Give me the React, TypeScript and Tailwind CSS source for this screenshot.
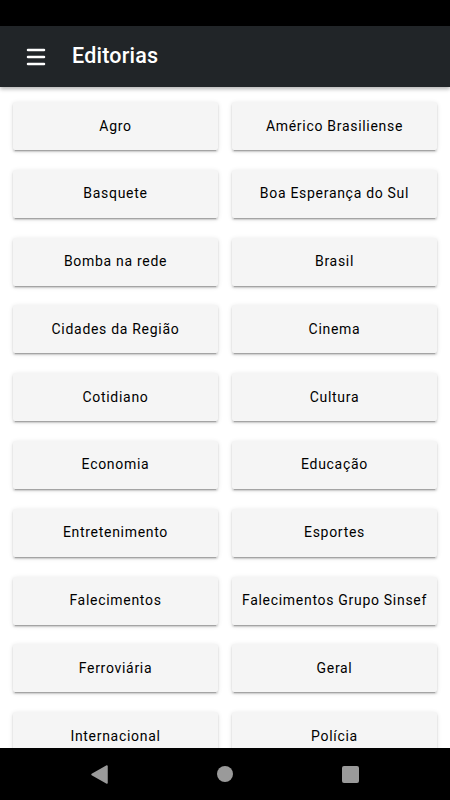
import { Menu } from "lucide-react";

const editorias = [
  "Agro",
  "Américo Brasiliense",
  "Basquete",
  "Boa Esperança do Sul",
  "Bomba na rede",
  "Brasil",
  "Cidades da Região",
  "Cinema",
  "Cotidiano",
  "Cultura",
  "Economia",
  "Educação",
  "Entretenimento",
  "Esportes",
  "Falecimentos",
  "Falecimentos Grupo Sinsef",
  "Ferroviária",
  "Geral",
  "Internacional",
  "Polícia",
];

const App = () => {
  return (
    <div className="w-[450px] h-[800px] flex flex-col bg-white font-['Roboto',sans-serif] overflow-hidden">
      {/* Status bar */}
      <div className="h-[26px] bg-black shrink-0" />

      {/* App bar */}
      <div className="h-[61px] bg-[#212528] flex items-center shrink-0 shadow-[0_2px_4px_rgba(0,0,0,0.3)] z-10">
        <Menu className="w-6 h-6 ml-6 text-white" strokeWidth={2.5} />
        <h1 className="ml-6 text-white text-[21.5px] font-medium tracking-[0.2px]">Editorias</h1>
      </div>

      {/* Content */}
      <div className="flex-1 overflow-hidden">
        <div className="grid grid-cols-2 gap-x-[14px] gap-y-[19.8px] px-[13px] pt-[15px] pb-4">
          {editorias.map((name) => (
            <button
              key={name}
              className="h-12 bg-[#f5f5f5] rounded-[2px] text-[14px] font-normal tracking-[0.7px] text-black shadow-[0_3px_1px_-2px_rgba(0,0,0,0.2),0_2px_2px_0_rgba(0,0,0,0.14),0_1px_5px_0_rgba(0,0,0,0.12)] whitespace-nowrap"
            >
              {name}
            </button>
          ))}
        </div>
      </div>

      {/* Navigation bar */}
      <div className="h-[52px] bg-black shrink-0 flex items-center justify-between px-[91px]">
        <svg width="17" height="19" viewBox="0 0 17 19">
          <path d="M16 1 L16 18 L1 9.5 Z" fill="#9a9a9a" stroke="#9a9a9a" strokeWidth="1.5" strokeLinejoin="round" />
        </svg>
        <div className="w-4 h-4 rounded-full bg-[#9a9a9a]" />
        <div className="w-[17px] h-[17px] rounded-[2px] bg-[#9a9a9a]" />
      </div>
    </div>
  );
};

export default App;
